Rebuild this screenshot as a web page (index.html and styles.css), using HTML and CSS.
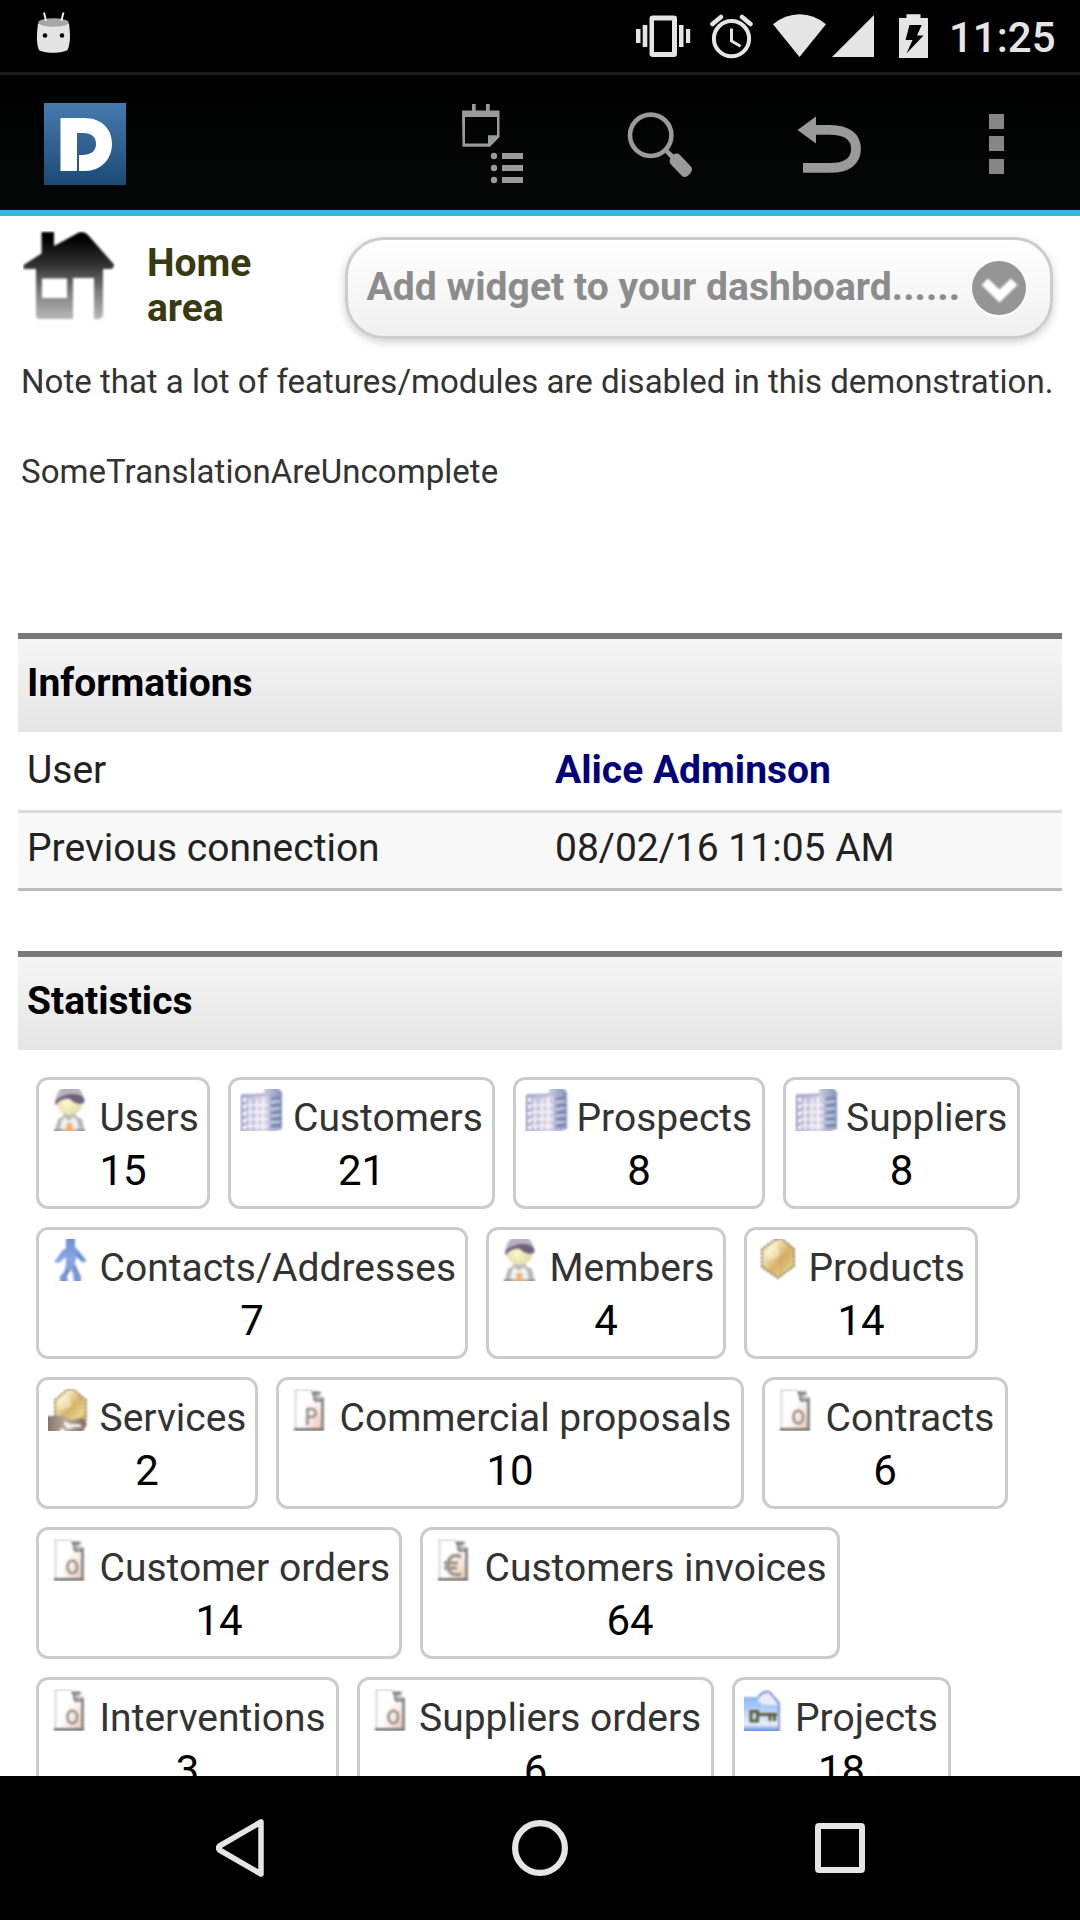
FILE: index.html
```
<!DOCTYPE html>
<html lang="en">
<head>
<meta charset="utf-8">
<title>Home area</title>
<link rel="stylesheet" href="styles.css">
</head>
<body>
<svg class="defs" width="0" height="0" aria-hidden="true">
  <defs>
    <linearGradient id="logoFill" x1="0" y1="0" x2="0" y2="1"><stop offset="0" stop-color="#467aae"/><stop offset="1" stop-color="#1b4a76"/></linearGradient>
    <linearGradient id="houseFill" gradientUnits="userSpaceOnUse" x1="0" y1="0" x2="0" y2="86"><stop offset="0.08" stop-color="#000"/><stop offset="0.4" stop-color="#333"/><stop offset="0.7" stop-color="#7c7c7c"/><stop offset="1" stop-color="#b4b4b4"/></linearGradient>
    <linearGradient id="blue" x1="0" y1="0" x2="1" y2="0"><stop offset="0" stop-color="#a9add2"/><stop offset="0.55" stop-color="#dcd5e6"/><stop offset="1" stop-color="#a4a6cb"/></linearGradient>
    <linearGradient id="tower" x1="0" y1="0" x2="1" y2="0"><stop offset="0" stop-color="#c5cade"/><stop offset="1" stop-color="#8292bd"/></linearGradient>
    <linearGradient id="gold" x1="0" y1="0" x2="1" y2="1"><stop offset="0" stop-color="#e0c77c"/><stop offset="0.25" stop-color="#f5ecc0"/><stop offset="0.55" stop-color="#d8b268"/><stop offset="0.8" stop-color="#e6d28e"/><stop offset="1" stop-color="#c09a4e"/></linearGradient>
    <linearGradient id="person" x1="0" y1="0" x2="0" y2="1"><stop offset="0" stop-color="#6c8bcb"/><stop offset="0.5" stop-color="#86a8e6"/><stop offset="1" stop-color="#7394d4"/></linearGradient>
    <radialGradient id="face" cx="0.4" cy="0.55" r="0.6"><stop offset="0" stop-color="#fbf8cc"/><stop offset="1" stop-color="#ded9a6"/></radialGradient>
    <radialGradient id="paper" cx="1" cy="1" r="0.85"><stop offset="0" stop-color="#ecc0a0"/><stop offset="0.5" stop-color="#f5e2d8"/><stop offset="1" stop-color="#fff"/></radialGradient>
    <linearGradient id="folder" x1="0" y1="0" x2="0" y2="1"><stop offset="0" stop-color="#7daaf0"/><stop offset="0.45" stop-color="#b4d2fa"/><stop offset="0.8" stop-color="#eaf0fd"/><stop offset="0.9" stop-color="#86a3e0"/><stop offset="1" stop-color="#5e80cf"/></linearGradient>
    <linearGradient id="hand" x1="0" y1="0" x2="1" y2="0"><stop offset="0" stop-color="#82705f"/><stop offset="0.5" stop-color="#b8aca0"/><stop offset="1" stop-color="#78695c"/></linearGradient>
    <filter id="soft" x="-60%" y="-60%" width="220%" height="220%" color-interpolation-filters="sRGB"><feGaussianBlur stdDeviation="0.9"/></filter>
    <symbol id="i-user" viewBox="0 0 48 42"><g filter="url(#soft)">
      <path d="M7 13C7 6 12 0 15 -3H28C33 1 36 5 36 13Z" fill="#c3c2c9"/>
      <path d="M16 23H27L28 27L34 30L37 44H6L10 30L15 27Z" fill="#b9b9b6"/>
      <path d="M17 28L21 32L25 28L29 31L31 40H12L14 31Z" fill="#f0f0ee"/>
      <circle cx="21.500" cy="13" r="13" fill="url(#face)"/>
      <path d="M7 15C8 6 20 4 28 5C35 6 38 10 36 14C31 16 26 14 22 10C17 9 11 11 8 16Z" fill="#6f617f"/>
      <path d="M9 9C11 4 14 -2 19 -3H25C30 -1 34 3 34 6C27 3 18 5 9 10Z" fill="#b5b2bf"/>
      <path d="M19 34H24L25 44H18Z" fill="#f3b06c"/><path d="M6 40H14V44H6ZM29 40H37V44H29Z" fill="#999"/>
    </g></symbol>
    <symbol id="i-company" viewBox="0 0 48 42"><g filter="url(#soft)">
      <path d="M1 6L24 4V-3H34C39 0 42 2 42 6V40L32 44H1Z" fill="url(#blue)"/>
      <path d="M24 3C29 -3 39 -4 42 4V39L29 41V9Z" fill="url(#tower)"/>
      <path d="M10 10V41M17 10V41M23 8V41M6 16H28M6 23H28M6 30H28M6 37H28" fill="none" stroke="#fff" stroke-width="2" opacity="0.75"/>
      <path d="M4.500 9V41" stroke="#fff" stroke-width="3" stroke-dasharray="3.500 3.500"/>
      <path d="M1.500 6V44M2 6H25" fill="none" stroke="#9a9fca" stroke-width="1.500"/>
      <path d="M31 10L40 9M31 17L40 16M31 24L40 23M31 30L40 30M31 37L40 36" stroke="#647398" stroke-width="1.600"/>
      <path d="M31 13L40 12M31 20L40 19M31 27L40 26M31 33L40 33" stroke="#cbd3ea" stroke-width="1.600"/>
    </g></symbol>
    <symbol id="i-contact" viewBox="0 0 48 42"><g filter="url(#soft)">
      <path d="M18 -3H27V8L31 12L39 22L35 24L28 18L27 25L30 34L33 37V44H26L25 35L23 31L19 36L20 44H12V37L16 33L18 25V18L11 24L6 23L14 12L18 9Z" fill="url(#person)"/>
      <path d="M29 15L35 21M27 27L31 36M20 31L18 37" fill="none" stroke="#5c6c98" stroke-width="1.500"/>
    </g></symbol>
    <symbol id="i-product" viewBox="0 0 48 42"><g filter="url(#soft)">
      <path d="M20 0L26 0L38 10V27L22 39L6 28V10Z" fill="url(#gold)" stroke="#75634a" stroke-width="1.800" stroke-dasharray="2.500 1.600"/>
      <path d="M9 12L20 4L24 17L13 21Z" fill="#fff9dd" opacity="0.45"/>
      <path d="M23 17L35 13V25L23 35Z" fill="#c99b50" opacity="0.28"/>
    </g></symbol>
    <symbol id="i-service" viewBox="0 0 48 42"><g filter="url(#soft)">
      <path d="M20 0L25 0L38 11V31L22 33L7 27V11Z" fill="url(#gold)" stroke="#87704c" stroke-width="1.800" stroke-dasharray="2.500 1.600"/>
      <path d="M10 12L20 4L24 17L13 21Z" fill="#fff9dd" opacity="0.45"/>
      <path d="M-2 27H15L24 31L35 29L39 35L34 44H20L14 39L9 44H-2Z" fill="url(#hand)"/>
      <path d="M16 32L22 35H31L35 38H27L20 40L16 36Z" fill="#f4f1ed"/>
    </g></symbol>
    <symbol id="i-doc" viewBox="0 0 48 42"><g filter="url(#soft)">
      <path d="M7 0H23L36 9V41H7Z" fill="url(#paper)"/>
      <path d="M7.500 41V0.700H24" fill="none" stroke="#dcdcdc" stroke-width="2.200"/>
      <path d="M23 2H32V8H36V13H26Z" fill="#c0c0c0"/><path d="M24 4H33M26.500 4V11.500H35" fill="none" stroke="#707070" stroke-width="1.900" stroke-dasharray="3 1"/>
      <path d="M34.500 9V41" stroke="#8c8c8c" stroke-width="3"/><path d="M6 40.500H36" stroke="#7a7a7a" stroke-width="3"/>
    </g></symbol>
    <symbol id="i-order" viewBox="0 0 48 42"><use href="#i-doc" width="48" height="42"/><ellipse cx="24.300" cy="28" rx="4.900" ry="6.300" fill="none" stroke="#979290" stroke-width="2.500" filter="url(#soft)"/></symbol>
    <symbol id="i-proposal" viewBox="0 0 48 42"><use href="#i-doc" width="48" height="42"/><path d="M19.500 36V20H24C29 20 29 28 24 28H20" fill="none" stroke="#979290" stroke-width="2.600" filter="url(#soft)"/></symbol>
    <symbol id="i-invoice" viewBox="0 0 48 42"><use href="#i-doc" width="48" height="42"/><path d="M29 18C20 14 16 20 16 26S20 38 29 35M12 24H26M12 29H25" fill="none" stroke="#a0978a" stroke-width="3.600" filter="url(#soft)"/></symbol>
    <symbol id="i-project" viewBox="0 0 48 42"><g filter="url(#soft)">
      <path d="M-2 8H13L20 3H27L32 9L36 14V44H-2Z" fill="url(#folder)"/>
      <path d="M14 12C15 6 19 5 22 4C26 3 31 7 31 12L35 16H24C20 16 16 15 14 12Z" fill="#ecebf9"/>
      <path d="M14 8C20 1 25 1 28 6L35 14V40" fill="none" stroke="#7f90d0" stroke-width="1.800"/>
      <path d="M7 22.500H13.500V32H7ZM14 25.500H33M26 26V32M30.500 26V32" fill="none" stroke="#5f5f3c" stroke-width="3"/>
    </g></symbol>
  </defs>
</svg>

<header class="statusbar">
  <svg class="marshmallow" width="36" height="42" viewBox="0 0 36 42">
    <path d="M2 11.500C1 20 0 29 2.500 37C4 42 30 42 32 37C35 29 34 20 33 11.500Z" fill="#e4e4e4"/>
    <ellipse cx="17.500" cy="10.500" rx="15.300" ry="4.200" fill="#a6a6a6"/>
    <path d="M8 0.500L10 9M27.500 0.500L25.300 9" stroke="#f2f2f2" stroke-width="1.900"/>
    <circle cx="9" cy="23.500" r="2.300" fill="#000"/><circle cx="26" cy="23.500" r="2.300" fill="#000"/>
  </svg>
  <svg class="status-icons" width="294" height="46" viewBox="636 14 294 46" fill="#e5e5e5">
    <path fill-rule="evenodd" d="M653 15.500H674Q677 15.500 677 18.500V54Q677 57 674 57H653Q649.500 57 649.500 54V18.500Q649.500 15.500 653 15.500ZM654 20.500V52H672V20.500Z"/>
    <path d="M636 29h4.500v14h-4.500zM642.700 25h4.600v22h-4.600zM679 25h4.500v22h-4.500zM686 29h4.200v14h-4.200z"/>
    <circle cx="731.500" cy="38.700" r="17.600" fill="none" stroke="#e5e5e5" stroke-width="4"/>
    <path d="M731.500 28.500V41L740.500 46.200" fill="none" stroke="#e5e5e5" stroke-width="3"/>
    <path d="M712.500 24L721 17M750.500 24L742 17" fill="none" stroke="#e5e5e5" stroke-width="4.500" stroke-linecap="round"/>
    <path d="M773 24.300Q785 14.300 799.500 14.300T826 24.300L799.500 57Z"/>
    <path d="M832 57L874 15V57Z"/>
    <path fill-rule="evenodd" d="M906.500 14.300H920.500V18H928V58H899V18H906.500ZM909.500 25L905.500 40H912.500L906.500 53.500L923.500 35.500H917L921.700 25Z"/>
  </svg>
  <span class="clock">11:25</span>
</header>

<nav class="appbar">
  <svg class="logo" width="82" height="82" viewBox="0 0 82 82">
    <rect width="82" height="82" fill="url(#logoFill)"/>
    <path d="M16.500 15H40C58 15 68 26 68 41S57 68 41 68H35V52H38C47 52 52 48 52 41S48 30 39 30H33V68H16.500Z" fill="#fff"/>
  </svg>
  <svg class="action-note" width="63" height="80" viewBox="462 104 63 80" fill="#9a9a9a">
    <path d="M462 110.500H472V104H475.700V110.500H486V104H489.700V110.500H499.500V137L490 146.700H462.500ZM465 117V143.500H488V135.300H497V117Z" fill-rule="evenodd"/>
    <circle cx="494" cy="156" r="3.200"/><circle cx="494" cy="168" r="3.200"/><circle cx="494" cy="180" r="3.200"/>
    <path d="M502 153h21v6h-21zM502 165h21v6h-21zM502 177h21v6h-21z"/>
  </svg>
  <svg class="action-search" width="65" height="66" viewBox="627 112 65 66">
    <circle cx="650.700" cy="135.300" r="20.700" fill="none" stroke="#9a9a9a" stroke-width="4.600"/>
    <path d="M664.500 152L667.500 148.700L673.500 154.500Q677 152.500 680 155L690.500 166Q693.500 169 690.500 173Q686 179 682 176L671 164.500Q668.500 162 670.500 158.500Z" fill="#9a9a9a"/>
  </svg>
  <svg class="action-back" width="64" height="58" viewBox="797 116 64 58">
    <path d="M797.500 130L816 116.500V143.500Z" fill="#9a9a9a"/>
    <path d="M815 129.800H830C847 129.800 856 137 856 149S847 167.900 830 167.900H803" fill="none" stroke="#9a9a9a" stroke-width="9.800"/>
  </svg>
  <svg class="action-more" width="15" height="60" viewBox="0 0 15 60" fill="#868686"><path d="M0 0h15v15h-15zM0 22h15v15h-15zM0 45h15v15h-15z"/></svg>
</nav>

<main class="page">
  <section class="title-row">
    <svg class="house" width="92" height="90" viewBox="0 0 92 90"><g filter="url(#soft)">
      <path fill-rule="evenodd" d="M18.500 1H31V15L54 2.500Q60 -1 65 4L91.500 34L89 38H80V84Q79 88 75 88H71V47H50V88H16Q13 88 13 84V38H0.500V34L18.500 22.500ZM19 47.500V67H44V47.500Z" fill="url(#houseFill)"/>
    </g></svg>
    <h1 class="title">Home area</h1>
    <div class="select">
      <span>Add widget to your dashboard......</span>
      <svg width="54" height="57" viewBox="0 0 54 57"><circle cx="27" cy="29" r="27" fill="#fff"/><circle cx="27" cy="27" r="27" fill="#959595"/><path d="M9.500 24L16 17.500L27.500 28.500L39 17.500L45.500 24L27.500 41.500Z" fill="#fff" filter="url(#soft)"/></svg>
    </div>
  </section>

  <p class="note">Note that a lot of features/modules are disabled in this demonstration.</p>
  <p class="note second">SomeTranslationAreUncomplete</p>

  <section class="panel informations">
    <h2 class="panel-title">Informations</h2>
    <div class="row"><span>User</span><a class="user-link">Alice Adminson</a></div>
    <div class="row alt"><span>Previous connection</span><span>08/02/16 11:05 AM</span></div>
  </section>

  <section class="panel statistics">
    <h2 class="panel-title">Statistics</h2>
    <div class="stats">
      <div class="stats-row">
        <div class="stat users"><div class="label"><svg><use href="#i-user"/></svg>Users</div><div class="value">15</div></div>
        <div class="stat customers"><div class="label"><svg><use href="#i-company"/></svg>Customers</div><div class="value">21</div></div>
        <div class="stat prospects"><div class="label"><svg><use href="#i-company"/></svg>Prospects</div><div class="value">8</div></div>
        <div class="stat suppliers"><div class="label"><svg><use href="#i-company"/></svg>Suppliers</div><div class="value">8</div></div>
      </div>
      <div class="stats-row">
        <div class="stat contacts"><div class="label"><svg><use href="#i-contact"/></svg>Contacts/Addresses</div><div class="value">7</div></div>
        <div class="stat members"><div class="label"><svg><use href="#i-user"/></svg>Members</div><div class="value">4</div></div>
        <div class="stat products"><div class="label"><svg><use href="#i-product"/></svg>Products</div><div class="value">14</div></div>
      </div>
      <div class="stats-row">
        <div class="stat services"><div class="label"><svg><use href="#i-service"/></svg>Services</div><div class="value">2</div></div>
        <div class="stat proposals"><div class="label"><svg><use href="#i-proposal"/></svg>Commercial proposals</div><div class="value">10</div></div>
        <div class="stat contracts"><div class="label"><svg><use href="#i-order"/></svg>Contracts</div><div class="value">6</div></div>
      </div>
      <div class="stats-row">
        <div class="stat orders"><div class="label"><svg><use href="#i-order"/></svg>Customer orders</div><div class="value">14</div></div>
        <div class="stat invoices"><div class="label"><svg><use href="#i-invoice"/></svg>Customers invoices</div><div class="value">64</div></div>
      </div>
      <div class="stats-row">
        <div class="stat interventions"><div class="label"><svg><use href="#i-order"/></svg>Interventions</div><div class="value">3</div></div>
        <div class="stat supplier-orders"><div class="label"><svg><use href="#i-order"/></svg>Suppliers orders</div><div class="value">6</div></div>
        <div class="stat projects"><div class="label"><svg><use href="#i-project"/></svg>Projects</div><div class="value">18</div></div>
      </div>
    </div>
  </section>
</main>

<footer class="navbar">
  <svg width="48" height="58" viewBox="0 0 48 58"><path d="M45 3V55L3.500 31Q1.500 29 3.500 27Z" fill="none" stroke="#e5e5e5" stroke-width="5.500" stroke-linejoin="round"/></svg>
  <svg width="56" height="56" viewBox="0 0 56 56"><circle cx="28" cy="28" r="24.900" fill="none" stroke="#e5e5e5" stroke-width="6.200"/></svg>
  <svg width="50" height="50" viewBox="0 0 50 50"><rect x="3" y="3" width="44" height="44" rx="1" fill="none" stroke="#e5e5e5" stroke-width="6" stroke-linejoin="round"/></svg>
</footer>
</body>
</html>
```
FILE: styles.css
```
* { box-sizing: border-box; margin: 0; padding: 0; }
body {
  width: 1080px;
  height: 1920px;
  display: flex;
  flex-direction: column;
  overflow: hidden;
  background: #fff;
  color: #222;
  font: 400 39px/45px Roboto, sans-serif;
}
svg { display: block; flex: none; }
.defs { position: absolute; }

.statusbar {
  flex: none;
  height: 75px;
  display: flex;
  align-items: flex-start;
  background: #000;
  border-bottom: 3px solid #1b1b1b;
}
.marshmallow { margin: 12px 0 0 36px; }
.status-icons { margin: 14px 0 0 564px; }
.clock { margin-left: 19px; color: #e5e5e5; font-size: 42px; font-weight: 500; line-height: 76px; height: 72px; }

.appbar {
  flex: none;
  height: 141px;
  display: flex;
  align-items: flex-start;
  background: linear-gradient(#000, #060808);
  border-bottom: 6px solid #33b5e5;
}
.logo { margin: 28px 0 0 44px; }
.action-note { margin: 29px 0 0 336px; }
.action-search { margin: 37px 0 0 102px; }
.action-back { margin: 41px 0 0 105px; }
.action-more { margin: 39px 0 0 128px; }

.page { flex: 1; min-height: 0; overflow: hidden; }
.title-row { display: flex; align-items: flex-start; height: 143px; padding: 15px 27px 0 23px; }
.title { width: 140px; margin: 10px 0 0 32px; color: #3a3a12; font-size: 39px; line-height: 45px; }
.select {
  flex: none;
  width: 708px;
  height: 102px;
  margin: 6px 0 0 auto;
  padding: 0 24px 0 18.5px;
  display: flex;
  align-items: flex-start;
  justify-content: space-between;
  border: 3px solid #ccc;
  border-radius: 39px;
  background: linear-gradient(#fff, #f0f0f0);
  box-shadow: 0 3px 9px rgba(0, 0, 0, 0.2);
  color: #8c8c8c;
  font-weight: 700;
  line-height: 95px;
  letter-spacing: 0.05px;
  white-space: nowrap;
}
.select svg { margin-top: 21px; }
.note { padding-left: 21px; color: #333; font-size: 33px; line-height: 45px; letter-spacing: 0.01px; white-space: nowrap; }
.note.second { margin-top: 45px; letter-spacing: 0.05px; }

.panel { margin: 0 18px; }
.informations { margin-top: 139px; }
.statistics { margin-top: 60px; }
.panel-title {
  height: 99px;
  padding-left: 9px;
  border-top: 6px solid #787878;
  background: linear-gradient(#f5f5f5, #e5e5e5);
  color: #000;
  font-size: 39px;
  line-height: 89px;
}
.row {
  display: grid;
  grid-template-columns: 528px 1fr;
  height: 81px;
  padding-left: 9px;
  border-bottom: 3px solid #ddd;
  line-height: 77px;
}
.row.alt { height: 78px; background: #f8f8f8; border-color: #bbb; line-height: 71px; }
.user-link { color: #00007a; font-weight: 700; }

.stats { display: flex; flex-direction: column; gap: 18px; padding: 27px 18px 0; }
.stats-row { display: flex; gap: 18px; }
.stat {
  flex: none;
  height: 132px;
  padding: 9px 0 0 9px;
  border: 3px solid #ccc;
  border-radius: 12px;
  background: #fff;
}
.label { display: flex; gap: 3.5px; height: 57px; color: #333; line-height: 59px; white-space: nowrap; }
.label svg { width: 48px; height: 42px; }
.value { margin-right: 9px; color: #000; font-size: 42px; line-height: 49px; text-align: center; }
.users { width: 174px; }
.customers { width: 267px; }
.customers .label { gap: 5px; }
.prospects { width: 252px; }
.suppliers { width: 237px; }
.suppliers .label { gap: 3px; }
.contacts { width: 432px; }
.members { width: 240px; }
.products { width: 234px; }
.products .label { gap: 4.5px; }
.services { width: 222px; }
.proposals { width: 468px; }
.contracts { width: 246px; }
.orders { width: 366px; }
.invoices { width: 420px; }
.invoices .label { gap: 4.5px; }
.interventions { width: 303px; }
.supplier-orders { width: 357px; }
.supplier-orders .label { gap: 2px; }
.projects { width: 219px; }
.projects .label { gap: 3px; }

.navbar {
  flex: none;
  height: 144px;
  padding: 0 215px 0 216px;
  display: flex;
  align-items: center;
  justify-content: space-between;
  background: #000;
}
```
